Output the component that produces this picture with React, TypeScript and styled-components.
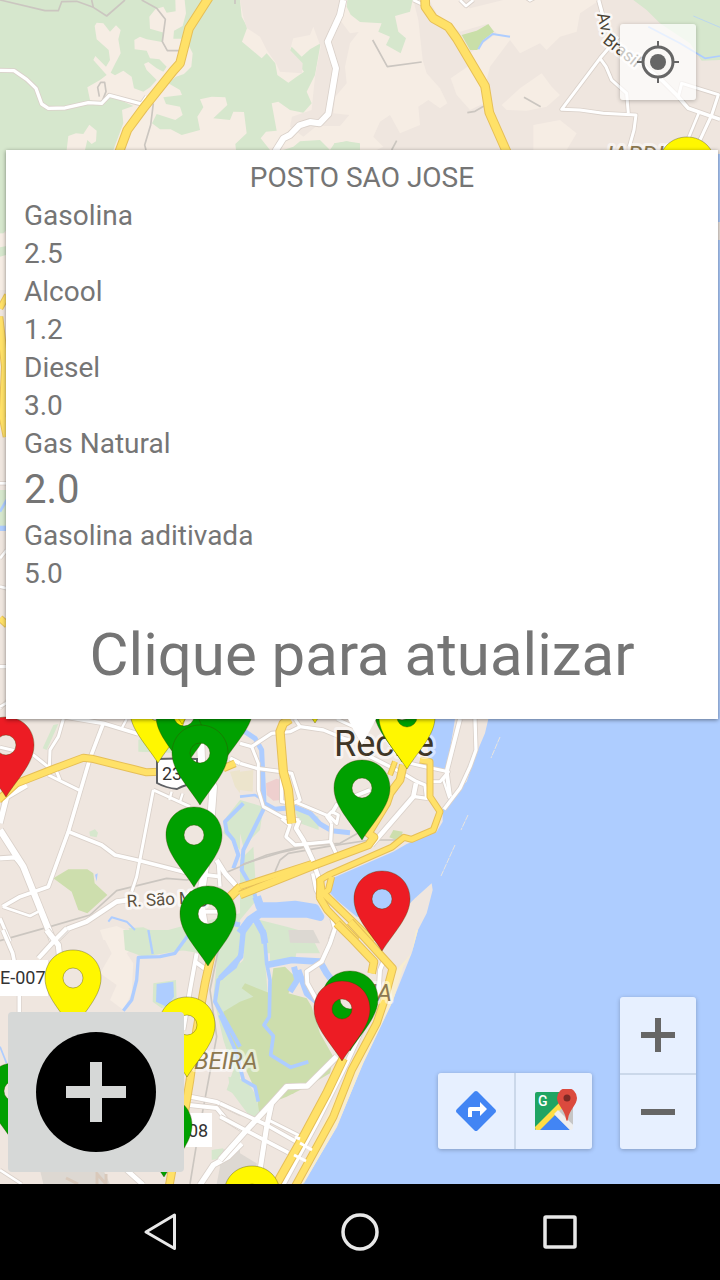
import React from "react";
import styled, { createGlobalStyle } from "styled-components";

const GlobalStyle = createGlobalStyle`
  *, *::before, *::after { box-sizing: border-box; }
  body { margin: 0; font-family: Roboto, "Noto Sans", sans-serif; background: #000; }
  button { font: inherit; margin: 0; border: 0; cursor: pointer; }
`;

const Screen = styled.div`
  display: flex;
  flex-direction: column;
  min-height: 100vh;
`;

const MapArea = styled.main`
  position: relative;
  flex: 1;
  display: flex;
  flex-direction: column;
  overflow: hidden;
  background: #efe6df;
`;

const MapCanvas = styled.svg`
  position: absolute;
  inset: 0;
  width: 100%;
  height: 100%;
  font-family: Roboto, sans-serif;
`;

const TopControls = styled.div`
  position: relative;
  display: flex;
  justify-content: flex-end;
  padding: 24px 24px 50px;
`;

const BottomControls = styled.div`
  position: relative;
  display: flex;
  align-items: flex-end;
  gap: 28px;
  margin-top: auto;
  padding: 0 24px 12px 8px;
`;

const ControlGroup = styled.div<{ $vertical?: boolean }>`
  display: flex;
  flex-direction: ${(p) => (p.$vertical ? "column" : "row")};
  margin-bottom: ${(p) => (p.$vertical === undefined ? 0 : 23)}px;
  border-radius: 3px;
  background: rgba(255, 255, 255, 0.7);
  box-shadow: 0 1px 4px rgba(0, 0, 0, 0.25);
`;

const ControlButton = styled.button<{ $divider?: "left" | "top" }>`
  display: flex;
  align-items: center;
  justify-content: center;
  width: ${(p) => (p.$divider === "left" ? 78 : 76)}px;
  height: 76px;
  padding: 0;
  background: transparent;
  ${(p) => p.$divider && `border-${p.$divider}: 2px solid #cbd8ea;`}
`;

const AddButton = styled.button`
  display: flex;
  align-items: center;
  justify-content: center;
  width: 176px;
  height: 160px;
  margin-right: auto;
  padding: 0;
  border-radius: 4px;
  background: #d6d8d7;
`;

const InfoWindow = styled.section`
  position: relative;
  margin: 0 2px 0 6px;
  padding: 9px 18px 24px;
  background: #fff;
  color: #757575;
  box-shadow: 0 1px 4px rgba(0, 0, 0, 0.45);

  &::after {
    content: "";
    position: absolute;
    top: 100%;
    left: 50%;
    width: 28px;
    height: 26px;
    transform: translateX(-50%);
    background: #fff;
    clip-path: polygon(0 0, 100% 0, 50% 100%);
  }
`;

const StationName = styled.h1`
  margin: 0;
  font-size: 28px;
  font-weight: 400;
  line-height: 38px;
  text-align: center;
`;

const PriceList = styled.dl`
  margin: 0;
`;

const Fuel = styled.dt`
  font-size: 28px;
  line-height: 38px;
`;

const Price = styled.dd<{ $large?: boolean }>`
  margin: 0;
  font-size: ${(p) => (p.$large ? 40 : 28)}px;
  line-height: ${(p) => (p.$large ? 54 : 38)}px;
`;

const UpdateButton = styled.button`
  && {
    display: block;
    width: 100%;
    margin-top: 22px;
    padding: 0;
    background: transparent;
    color: inherit;
    font-size: 60px;
    line-height: 80px;
    text-align: center;
  }
`;

const NavBar = styled.nav`
  display: flex;
  height: 96px;
  padding: 0 60px;
  background: #000;
`;

const NavButton = styled.button`
  flex: 1;
  display: flex;
  align-items: center;
  justify-content: center;
  padding: 0;
  background: transparent;
`;

/* ---------- map data: each tile is drawn at three units per pixel ---------- */

type Road = { d: string; w?: number };
type Shape = { d: string; fill: string };
type TileData = {
  x: number;
  y: number;
  shapes: Shape[];
  rivers?: Road[];
  paths?: string[];
  white: Road[];
  yellow: Road[];
};

const LAND = "#efe6df";
const LIGHT = "#f6ede4";
const GREEN = "#d6e7cd";
const PARK = "#cddead";
const WATER = "#aecdff";

const tiles: TileData[] = [
  {
    x: 0,
    y: 0,
    shapes: [
      { d: "M0 0H1090V2160H0Z", fill: LAND },
      { d: "M0 0H1080V460H0Z", fill: GREEN },
      { d: "M290 68 310 70 330 95 348 76 362 90 355 118 362 160 345 192 332 218 345 226 370 212 395 230 402 265 430 275 450 262 470 240 440 210 432 192 445 186 470 205 490 215 500 200 478 178 450 175 440 152 404 148 403 120 420 110 440 118 486 126 492 98 450 86 448 50 466 28 490 20 500 38 527 34 526 0 554 0 558 40 548 78 522 92 520 116 556 116 578 160 574 200 552 222 528 230 505 250 540 270 546 285 490 292 498 312 540 320 548 345 526 360 470 342 456 370 480 388 512 388 545 405 600 390 592 350 610 322 600 298 635 290 676 292 682 315 640 355 690 360 700 335 732 336 740 400 706 432 708 450H340L370 370 366 330 400 318 360 300 330 290 300 310 270 300 262 262 300 240 320 225 280 180 286 168 318 200 330 180 326 150 290 118 284 78Z", fill: LIGHT },
      { d: "M200 450 205 408 228 400 250 402 268 374 290 392 288 424 275 432 262 420 255 450Z", fill: LIGHT },
      { d: "M720 0H1080V430L1040 424 1002 432 990 450 960 420 900 424 880 440 850 450H810L782 415 798 395 830 392 815 310 835 305 870 330 910 338 935 310 920 275 945 225 962 130 930 148 905 170 875 140 868 155 890 185 912 215 890 230 865 248 832 225 826 190 800 160 785 175 726 125 742 82 725 50Z", fill: LIGHT },
      { d: "M720 0H1040L1020 60 1050 100 1076 96 1050 130 1035 200 1040 250 1006 290 1000 340 1048 345 1020 378 950 378 910 410 870 380 876 350 935 330 945 230 962 140 940 80 930 105 880 115 870 150 908 190 906 220 840 215 828 190 800 150 780 110 740 84 730 50Z", fill: LAND },
      { d: "M1042 0H1080V66L1052 44 1040 20Z", fill: GREEN },
      { d: "M1002 430 1040 424 1080 436V450H1002Z", fill: GREEN },
      { d: "M0 450H20V690L10 700 0 740Z", fill: GREEN },
      { d: "M0 700H20V870H0Z", fill: LIGHT },
      { d: "M0 742 20 738V764L0 770Z", fill: GREEN },
      { d: "M0 1470 20 1470V1580H0Z", fill: GREEN },
    ],
    rivers: [{ d: "M0 1535 20 1500", w: 8 }, { d: "M0 1585H20", w: 16 }],
    paths: [
      "M0 0 135 32 175 32 185 5 230 4 280 22 320 48 375 0",
      "M275 0 280 22",
      "M425 0 470 25 496 58 487 125 502 152H540",
      "M460 310 452 375 434 435 438 450",
      "M705 0V12",
      "M298 290 293 262 302 247H314L318 275 308 300",
    ],
    white: [
      { d: "M0 211 42 212 80 238 108 265 125 312 145 325 195 324 265 308 305 310 328 286 425 312 440 290", w: 10 },
      { d: "M1030 0 1020 45 983 125 1008 205 985 342 958 370 930 366 898 376 870 405 850 415 825 455", w: 18 },
      { d: "M0 1450H20", w: 8 },
      { d: "M0 1675 20 1650", w: 8 },
      { d: "M0 1760 20 1765", w: 8 },
      { d: "M0 2000H20", w: 10 },
      { d: "M0 2125 25 2100", w: 8 },
    ],
    yellow: [
      { d: "M628 -10 567 85 540 190 520 212 430 325 382 390 358 455", w: 23 },
      { d: "M0 925 22 885", w: 14 },
      { d: "M-2 950 15 1100 8 1250 20 1310", w: 18 },
      { d: "M0 1855 22 1875", w: 16 },
    ],
  },
  {
    x: 360,
    y: 0,
    shapes: [
      { d: "M0 0H1080V460H0Z", fill: LAND },
      { d: "M0 0H160L175 60 188 180 200 220 240 265 262 310 240 325 205 300 175 320 180 375 120 400 90 345 60 365 40 410 70 440 50 450H0Z", fill: LIGHT },
      { d: "M208 0H300L330 25 430 0H720L660 40 650 95 600 110 560 150 540 130 480 160 450 120 390 200 380 240 330 160 410 100 380 72 300 95 240 60Z", fill: LIGHT },
      { d: "M272 235 330 195 370 250 372 310 330 330 290 285Z", fill: LIGHT },
      { d: "M425 315 480 265 545 220 575 260 600 285 560 320 500 332 440 330Z", fill: LIGHT },
      { d: "M520 375 600 360 650 400 620 450H520Z", fill: LIGHT },
      { d: "M0 0H158L150 35 105 48 115 95 138 115 122 160 78 135 90 110 55 95 65 70 0 66Z", fill: GREEN },
      { d: "M305 105 350 92 385 72 402 95 370 120 352 150 330 150Z", fill: "#c9dfa8" },
      { d: "M820 0H1080V180L1025 182 990 130 900 70 860 30Z", fill: GREEN },
    ],
    rivers: [
      { d: "M355 148 368 125 398 102 450 110", w: 6 },
      { d: "M865 80 960 130 1035 175 1080 168", w: 5 },
      { d: "M1000 48 1080 82", w: 2 },
    ],
    paths: ["M38 120 82 200 185 186", "M322 338 345 334 372 318", "M492 292 542 320", "M110 422 95 450"],
    white: [
      { d: "M160 0 185 12", w: 8 },
      { d: "M300 0 318 18 340 0", w: 8 },
      { d: "M498 -6 510 2 525 -6", w: 6 },
      { d: "M716 0 732 60 745 90", w: 10 },
      { d: "M775 110 720 175 605 328 660 330 730 340 828 345 822 390 808 440", w: 9 },
      { d: "M720 175 738 200 755 240 800 280 805 340", w: 9 },
      { d: "M760 120 830 180 905 240 950 285 985 325 1080 358", w: 11 },
      { d: "M955 290 965 250 1075 284 1055 345 1020 420", w: 9 },
      { d: "M1016 340 985 415", w: 8 },
    ],
    yellow: [{ d: "M195 -10 196 20 220 55 265 80 290 115 375 258 388 338 442 460", w: 23 }],
  },
  {
    x: 0,
    y: 700,
    shapes: [
      { d: "M140 150 128 145 160 75 175 72Z", fill: GREEN },
      { d: "M160 535 205 508 262 508 280 520 284 550 322 585 262 640 235 630 215 575Z", fill: PARK },
      { d: "M268 395 285 388 294 398 290 412 270 408Z", fill: GREEN },
      { d: "M285 524 293 520 290 544Z", fill: WATER },
      { d: "M415 120 470 90 560 110 560 160 415 155Z", fill: GREEN },
      { d: "M680 350 720 300V450L695 420 670 400Z", fill: GREEN },
      { d: "M690 215 720 210V280L705 260Z", fill: "#ece4cc" },
      { d: "M300 690 350 678 400 700 390 720H310Z", fill: LIGHT },
      { d: "M385 685 430 682 470 700 540 680 720 640V780L600 760 420 730Z", fill: GREEN },
    ],
    rivers: [
      { d: "M730 310 675 365 680 395 700 420 715 465 700 505", w: 12 },
      { d: "M325 665 335 652 380 665 405 690", w: 6 },
      { d: "M650 660 720 675", w: 16 },
    ],
    paths: ["M0 722 150 680 270 645 350 572 500 535 560 540 660 525 720 500"],
    white: [
      { d: "M0 20 22 8", w: 8 },
      { d: "M190 57 175 110 150 150 148 205", w: 9 },
      { d: "M0 142 100 165 150 205 170 215 180 240", w: 9 },
      { d: "M145 225 240 272", w: 9 },
      { d: "M190 50 310 70 415 102", w: 11 },
      { d: "M310 70 270 175 205 395 145 560 60 590 8 620", w: 11 },
      { d: "M380 57 365 85", w: 7 },
      { d: "M205 395 305 435 345 465 420 482 560 518 660 530", w: 11 },
      { d: "M460 270 435 400 410 530 395 575", w: 9 },
      { d: "M460 270 570 320", w: 9 },
      { d: "M515 275 508 300", w: 7 },
      { d: "M548 280 540 305", w: 7 },
      { d: "M80 255 20 290 0 370", w: 16 },
      { d: "M0 390 70 500 160 725", w: 19 },
      { d: "M0 475 45 472 70 500", w: 13 },
      { d: "M165 725 205 685 260 665 350 605 400 598", w: 14 },
      { d: "M8 620 90 648 115 635", w: 8 },
      { d: "M0 655 30 725", w: 10 },
      { d: "M600 80 605 200 640 260 628 420 600 600 620 720", w: 22 },
      { d: "M605 635H655", w: 12 },
      { d: "M650 480 675 520 720 570", w: 14 },
      { d: "M655 490 660 560", w: 10 },
      { d: "M690 175 720 190", w: 12 },
    ],
    yellow: [
      { d: "M-5 300 50 250 165 205 250 173 275 176 400 207 440 217 560 212", w: 18 },
      { d: "M670 205 705 190", w: 18 },
      { d: "M675 605 722 560", w: 22 },
    ],
  },
  {
    x: 240,
    y: 700,
    shapes: [
      { d: "M0 215 40 210 38 275 0 270Z", fill: "#ece4cc" },
      { d: "M0 300 70 320 60 390 10 440 0 400Z", fill: GREEN },
      { d: "M78 250 110 236 122 240 122 300 100 302 80 285Z", fill: "#eecfce" },
      { d: "M160 320 235 350 236 390 180 370Z", fill: GREEN },
      { d: "M460 390 488 395 482 425 448 412Z", fill: PARK },
      { d: "M0 480 40 440 50 600 0 660Z", fill: GREEN },
      { d: "M0 690 60 660 140 680 210 700 240 760 0 760Z", fill: GREEN },
      { d: "M560 57H645L620 210 585 210 565 180Z", fill: WATER },
      { d: "M745 57 735 100 705 170 680 245 630 290 608 330 608 365 590 395 500 432 460 455 265 540 262 570 290 600 350 650 480 640 525 595 575 550 578 570 560 640 534 690 515 760 459 900 369 1089 291 1281 189 1452H1440V-540H1436V57Z", fill: WATER },
    ],
    rivers: [
      { d: "M0 85 45 115 65 150 72 310 105 328 165 322 210 340 240 372 275 392 330 398", w: 15 },
      { d: "M72 325 40 390 10 450 5 510 40 570 55 620", w: 12 },
      { d: "M0 290 45 285 75 305", w: 8 },
      { d: "M0 700 30 660 60 640 200 640 240 650 225 625 165 615 110 620 60 620 50 590", w: 26 },
      { d: "M48 660 70 700 75 730", w: 20 },
      { d: "M440 57 430 100", w: 12 },
    ],
    paths: [
      "M0 498 80 465 180 440 300 430 380 385",
      "M10 492 120 458 200 440",
      "M105 515 120 480 145 460 260 440 390 420 480 420",
    ],
    white: [
      { d: "M0 130 35 140 95 100 150 95 180 80 250 90 310 115 330 120", w: 10 },
      { d: "M165 57 180 80", w: 9 },
      { d: "M290 57 340 80 370 130", w: 9 },
      { d: "M0 190 50 205 125 215 155 220 180 300 160 310 125 305 125 220", w: 10 },
      { d: "M35 140 55 190 55 270 70 320 125 350 178 360", w: 9 },
      { d: "M170 308 270 350 290 370 295 345 275 335 260 350 275 370", w: 9 },
      { d: "M275 340 290 315 340 290 390 270", w: 11 },
      { d: "M275 370 272 425 288 460", w: 10 },
      { d: "M125 355 150 375 138 410 165 435 270 425", w: 10 },
      { d: "M178 360 168 385 190 420 218 480 238 540", w: 13 },
      { d: "M218 520 228 570 240 590", w: 10 },
      { d: "M395 435 520 290 528 250", w: 14 },
      { d: "M370 160 480 215 530 245 555 255 560 295 525 290", w: 10 },
      { d: "M510 190 555 200 625 215 600 245 575 245", w: 9 },
      { d: "M660 57 620 215 630 290", w: 12 },
      { d: "M625 215 610 240 628 295", w: 7 },
      { d: "M705 57 708 150 690 200 660 265 612 328", w: 10 },
      { d: "M275 655 283 685 270 720", w: 9 },
      
    ],
    yellow: [
      { d: "M150 57 130 70 120 95 130 215 145 270 155 370", w: 22 },
      { d: "M540 180 570 185 570 290 600 335 580 390 515 418 492 412 455 442 265 525 240 540 238 590 265 570 275 530", w: 15 },
      { d: "M490 195 480 240 450 280 440 310 385 400 402 412 385 435 225 495 0 585", w: 20 },
      { d: "M0 560 215 490", w: 14 },
      { d: "M465 185 450 225", w: 12 },
      { d: "M240 535 245 575 400 725", w: 18 },
      { d: "M238 590 262 630 350 722", w: 18 },
    ],
  },
  {
    x: 0,
    y: 930,
    shapes: [
      { d: "M300 0H400L405 50 380 70 400 100 395 190 370 240 330 210 350 165 300 130 335 70Z", fill: LIGHT },
      { d: "M370 0H560L555 60 430 80 375 60Z", fill: GREEN },
      { d: "M460 160 528 150 530 215 485 235 458 215Z", fill: GREEN },
      { d: "M470 162 520 155 522 200 500 230 468 215Z", fill: WATER },
      { d: "M660 0H720V500L680 480 700 420 670 330 640 200Z", fill: GREEN },
      { d: "M670 240 720 230V370L690 310Z", fill: PARK },
      { d: "M120 720H310L330 762H130Z", fill: "#ddd8d2" },
      { d: "M640 660 720 655V762H650L660 710Z", fill: "#ddd8d2" },
      { d: "M635 660 670 655 665 685 635 690Z", fill: GREEN },
    ],
    rivers: [
      { d: "M445 0 458 72", w: 7 },
      { d: "M565 15 525 70 480 80 415 82 410 150 395 210 370 242", w: 10 },
      { d: "M725 65 705 110 655 150 645 215 720 350", w: 12 },
      { d: "M0 350 20 400", w: 5 },
    ],
    paths: ["M655 60 630 180 650 320 590 640 570 762", "M210 650 260 680"],
    white: [
      { d: "M8 0 38 70 58 170 58 250", w: 11 },
      { d: "M140 0 175 45 180 90", w: 16 },
      { d: "M200 -5 165 30 115 85", w: 13 },
      { d: "M590 70 570 180 550 300", w: 12 },
      { d: "M585 95 620 120", w: 12 },
      { d: "M0 720 65 762", w: 8 },
      { d: "M380 720 430 765", w: 14 },
      { d: "M560 498 650 516 725 552", w: 12 },
      { d: "M560 524 650 534 680 570 725 598", w: 12 },
      { d: "M600 765 640 705 685 680 725 640", w: 16 },
    ],
    yellow: [{ d: "M635 70 615 160 590 300 570 450 545 600 520 700 508 765", w: 20 }],
  },
  {
    x: 220,
    y: 930,
    shapes: [
      { d: "M0 0H60L50 90 0 150Z", fill: GREEN },
      { d: "M75 0H130L135 90 150 280 150 370 110 460 60 380 0 250V160L70 90Z", fill: GREEN },
      { d: "M150 0H200L230 60 225 95 150 105Z", fill: GREEN },
      { d: "M205 0H280L300 40 210 38Z", fill: "#dcd8d2" },
      { d: "M10 245 60 215 100 200 65 175 75 160 150 190 160 115 195 110 230 145 205 190 260 205 275 230 300 310 340 380 330 430 270 465 200 500 150 520 110 560 115 500 60 380 20 300Z", fill: PARK },
      { d: "M25 440 80 450 110 500 120 560 90 560 30 480Z", fill: GREEN },
      { d: "M588 0 575 70 520 130 500 200 460 330 400 390 300 600 220 760H252L350 590 430 400 520 210 550 110 575 70 594 0Z", fill: "#f8edcf" },
      { d: "M0 680 60 670 110 700V760H0Z", fill: "#ddd8d2" },
      { d: "M205 485 218 492 230 480Z", fill: PARK },
    ],
    rivers: [
      { d: "M70 0 62 80 0 145", w: 16 },
      { d: "M132 0 140 100 150 150 148 260 132 285 160 318 152 375 212 412 265 395", w: 11 },
      { d: "M140 105 215 90 300 95 320 130 335 150", w: 20 },
      { d: "M222 110 232 150 210 185", w: 18 },
      { d: "M235 120 260 190 290 215", w: 18 },
      { d: "M0 255 50 370 70 450 105 470 115 515", w: 11 },
    ],
    white: [
      { d: "M345 -5 330 40 305 95 260 125 262 160 290 210", w: 12 },
      { d: "M350 380 262 468 200 470 150 525 80 600 0 690", w: 16 },
      { d: "M155 520 140 590 120 720", w: 15 },
      { d: "M0 520 140 585 228 635", w: 11 },
      { d: "M0 560 85 605 205 668", w: 11 },
      { d: "M145 570 240 618", w: 9 },
      { d: "M490 95 480 120 475 200 430 290 380 400 290 580 190 765", w: 12 },
    ],
    yellow: [
      { d: "M350 -20 400 30 462 95 455 130", w: 20 },
      { d: "M390 -25 450 40 518 115 490 220 470 280 395 420 340 560 225 770", w: 19 },
      { d: "M370 385 320 490 250 620 165 770", w: 22 },
    ],
  },
];

type Pin = { x: number; y: number; color: string };
const G = "#00a000";
const Y = "#fff700";
const R = "#ed1c24";

const pins: Pin[] = [
  { x: 687, y: 137, color: Y },
  { x: 315, y: 643, color: Y },
  { x: 158, y: 683, color: Y },
  { x: 212, y: 664, color: G },
  { x: 182, y: 644, color: Y },
  { x: 184, y: 688, color: G },
  { x: 225, y: 680, color: G },
  { x: 402, y: 682, color: G },
  { x: 407, y: 689, color: Y },
  { x: 6, y: 717, color: R },
  { x: 200, y: 725, color: G },
  { x: 362, y: 760, color: G },
  { x: 194, y: 807, color: G },
  { x: 382, y: 871, color: R },
  { x: 208, y: 886, color: G },
  { x: 73, y: 950, color: Y },
  { x: 350, y: 971, color: G },
  { x: 342, y: 981, color: R },
  { x: 187, y: 997, color: Y },
  { x: 14, y: 1063, color: G },
  { x: 164, y: 1097, color: G },
  { x: 252, y: 1166, color: Y },
];

const pinPath =
  "M0 0C-16 0-28 12-28 28C-28 46-12 61 0 80C12 61 28 46 28 28C28 12 16 0 0 0ZM0 18A10 10 0 1 1 0 38A10 10 0 1 1 0 18Z";

const tileTransform = (t: TileData) => `translate(${t.x} ${t.y}) scale(0.33333)`;

function RoadSet({ roads, fill, casing, edge }: { roads: Road[]; fill: string; casing: string; edge: number }) {
  return (
    <g fill="none" strokeLinejoin="round">
      {roads.map((r, i) => (
        <path key={`c${i}`} d={r.d} stroke={casing} strokeWidth={(r.w ?? 10) + edge} />
      ))}
      {roads.map((r, i) => (
        <path key={`f${i}`} d={r.d} stroke={fill} strokeWidth={r.w ?? 10} />
      ))}
    </g>
  );
}

function CityMap() {
  return (
    <MapCanvas viewBox="0 0 720 1184" preserveAspectRatio="xMidYMid slice" role="img" aria-label="Mapa de Recife">
      {tiles.map((t, i) => (
        <g key={i} transform={tileTransform(t)}>
          {t.shapes.map((s, j) => (
            <path key={j} d={s.d} fill={s.fill} />
          ))}
        </g>
      ))}
      {tiles.map((t, i) => (
        <g key={i} transform={tileTransform(t)} fill="none" strokeLinejoin="round">
          {t.rivers?.map((r, j) => (
            <path key={j} d={r.d} stroke={WATER} strokeWidth={r.w} />
          ))}
          {t.paths?.map((d, j) => (
            <path key={j} d={d} stroke="#cbc6c0" strokeWidth={5} />
          ))}
        </g>
      ))}
      {tiles.map((t, i) => (
        <g key={i} transform={tileTransform(t)}>
          <RoadSet roads={t.white} fill="#fff" casing="#dad1ca" edge={5} />
        </g>
      ))}
      {tiles.map((t, i) => (
        <g key={i} transform={tileTransform(t)}>
          <RoadSet roads={t.yellow} fill="#ffe168" casing="#e6bf57" edge={6} />
        </g>
      ))}
      {/* streets crossing the avenue, and the reef line off the coast */}
      <path d="M295 1137 300 1139M300 1143 312 1150M294 1155 306 1161" stroke="#fff" strokeWidth="3" fill="none" />
      <path d="M468 815 461 830M455 845 441 876M500 737 491 758" stroke="#e9e5df" strokeWidth="1" strokeDasharray="6 1" fill="none" />
      <path d="M718 154H720V222H718ZM718 240H720V719H718Z" fill={WATER} />

      <g stroke="#fff" strokeOpacity="0.7" strokeWidth="6" strokeLinejoin="round" paintOrder="stroke">
        <text x="334" y="756" fontSize="36" fill="#3f3627" strokeOpacity="0.5">Recife</text>
        <text x="127" y="907" fontSize="17" fill="#5a5140" transform="rotate(-3 127 907)">R. São Mig</text>
        <g fill="#8c7850" strokeOpacity="0.5" fontStyle="italic" fontSize="24">
          <text x="600" y="163">JARDIM</text>
          <text x="194" y="1069">BEIRA</text>
          <text x="360" y="1001">NA</text>
        </g>
        <g fontSize="17" fill="#4a4436" strokeWidth="5">
          <text x="597" y="14" transform="rotate(77 597 14)">Av.</text>
          <text x="602" y="42" transform="rotate(38 602 42)">Brasil</text>
        </g>
      </g>
      <path d="M66 1178 78 1184M97 1184V1174L106 1184V1174" stroke="#d9c9bb" strokeWidth="3" fill="none" />
      <path d="M157 759Q177 758 197 759V783Q186 784 177 789Q166 788 157 783Z" fill="#fff" stroke="#5e6064" strokeWidth="2" />
      <text x="162" y="780" fontSize="18" fill="#333">232</text>
      <path d="M0 960H48V996H0ZM186 1113H212V1147H186Z" fill="#fff" />
      <g fontSize="18" fill="#333">
        <text x="0" y="984">E-007</text>
        <text x="188" y="1137">08</text>
      </g>

      {pins.map((p, i) => (
        <path
          key={i}
          d={pinPath}
          transform={`translate(${p.x} ${p.y})`}
          fill={p.color}
          fillRule="evenodd"
          stroke="#404000"
          strokeOpacity="0.35"
          strokeWidth="1"
        />
      ))}
    </MapCanvas>
  );
}

function LocateIcon() {
  return (
    <svg width="44" height="44" viewBox="-22 -22 44 44" aria-hidden="true">
      <g fill="none" stroke="#666" strokeWidth="3">
        <circle r="15" />
        <path d="M0-21V-15M0 15V21M-21 0H-15M15 0H21" strokeWidth="2" />
      </g>
      <circle r="8" fill="#666" />
    </svg>
  );
}

function DirectionsIcon() {
  return (
    <svg width="40" height="40" viewBox="0 0 40 40" aria-hidden="true">
      <path d="M18.5 .6Q20-.6 21.5 .6L39.4 18.5Q40.6 20 39.4 21.5L21.5 39.4Q20 40.6 18.5 39.4L.6 21.5Q-.6 20 .6 18.5Z" fill="#4285f4" />
      <path d="M12 26V18Q12 16 14 16H24V11L31 18L24 25V20H16V26Z" fill="#fff" />
    </svg>
  );
}

function MapsIcon() {
  return (
    <svg width="46" height="44" viewBox="-4 1 46 44" aria-hidden="true">
      <path d="M2 5H36V42H2Z" fill="#e9e9e9" />
      <path d="M2 4H26L26 17 0 42V6Q0 4 2 4Z" fill="#1fa463" />
      <path d="M38 18V37L24 24 28 15Z" fill="#c6c6c6" />
      <path d="M3 42 19 26 35 42Z" fill="#4285f4" />
      <path d="M2 42Q0 42 0 39L24 15 28 19 5 42Z" fill="#ffdd45" />
      <path d="M19 26 23 22 38 37Q39 42 35 42Z" fill="#eee" />
      <text x="3" y="18" fontSize="14" fontWeight="500" fill="#fff" fontFamily="Roboto, sans-serif">G</text>
      <path d="M32 0A10 10 0 0 0 22 10C22 17 30 22 31 31Q32 35 33 31C34 22 42 17 42 10A10 10 0 0 0 32 0Z" fill="#db4a3e" />
      <circle cx="32" cy="10" r="3.5" fill="#7d2a25" />
    </svg>
  );
}

function BarsIcon({ plus }: { plus?: boolean }) {
  return (
    <svg width="34" height="34" viewBox="0 0 34 34" aria-hidden="true">
      <path d={plus ? "M0 14H34V20H0ZM14 0H20V34H14Z" : "M0 14H34V20H0Z"} fill="#666" />
    </svg>
  );
}

const prices = [
  { fuel: "Gasolina", price: "2.5" },
  { fuel: "Alcool", price: "1.2" },
  { fuel: "Diesel", price: "3.0" },
  { fuel: "Gas Natural", price: "2.0", large: true },
  { fuel: "Gasolina aditivada", price: "5.0" },
];

export default function App() {
  return (
    <Screen>
      <GlobalStyle />
      <MapArea>
        <CityMap />
        <TopControls>
          <ControlGroup>
            <ControlButton aria-label="Minha localização">
              <LocateIcon />
            </ControlButton>
          </ControlGroup>
        </TopControls>

        <InfoWindow>
          <StationName>POSTO SAO JOSE</StationName>
          <PriceList>
            {prices.map((p) => (
              <React.Fragment key={p.fuel}>
                <Fuel>{p.fuel}</Fuel>
                <Price $large={p.large}>{p.price}</Price>
              </React.Fragment>
            ))}
          </PriceList>
          <UpdateButton>Clique para atualizar</UpdateButton>
        </InfoWindow>

        <BottomControls>
          <AddButton aria-label="Adicionar posto">
            <svg width="120" height="120" viewBox="0 0 120 120" aria-hidden="true">
              <circle cx="60" cy="60" r="60" fill="#000" />
              <path d="M30 54H54V30H66V54H90V66H66V90H54V66H30Z" fill="#d6d8d7" />
            </svg>
          </AddButton>
          <ControlGroup $vertical={false}>
            <ControlButton aria-label="Rotas">
              <DirectionsIcon />
            </ControlButton>
            <ControlButton $divider="left" aria-label="Abrir no Google Maps">
              <MapsIcon />
            </ControlButton>
          </ControlGroup>
          <ControlGroup $vertical>
            <ControlButton aria-label="Aumentar zoom">
              <BarsIcon plus />
            </ControlButton>
            <ControlButton $divider="top" aria-label="Diminuir zoom">
              <BarsIcon />
            </ControlButton>
          </ControlGroup>
        </BottomControls>
      </MapArea>

      <NavBar>
        <NavButton aria-label="Voltar">
          <svg width="40" height="40" viewBox="0 0 40 40" aria-hidden="true">
            <path d="M34.5 3V36.5L6 20Z" fill="none" stroke="#e8e8e8" strokeWidth="3" strokeLinejoin="round" />
          </svg>
        </NavButton>
        <NavButton aria-label="Início">
          <svg width="40" height="40" viewBox="0 0 40 40" aria-hidden="true">
            <circle cx="20" cy="20" r="17" fill="none" stroke="#e8e8e8" strokeWidth="3.5" />
          </svg>
        </NavButton>
        <NavButton aria-label="Recentes">
          <svg width="40" height="40" viewBox="0 0 40 40" aria-hidden="true">
            <rect x="5" y="5" width="30" height="30" rx="1" fill="none" stroke="#e8e8e8" strokeWidth="3.5" />
          </svg>
        </NavButton>
      </NavBar>
    </Screen>
  );
}
